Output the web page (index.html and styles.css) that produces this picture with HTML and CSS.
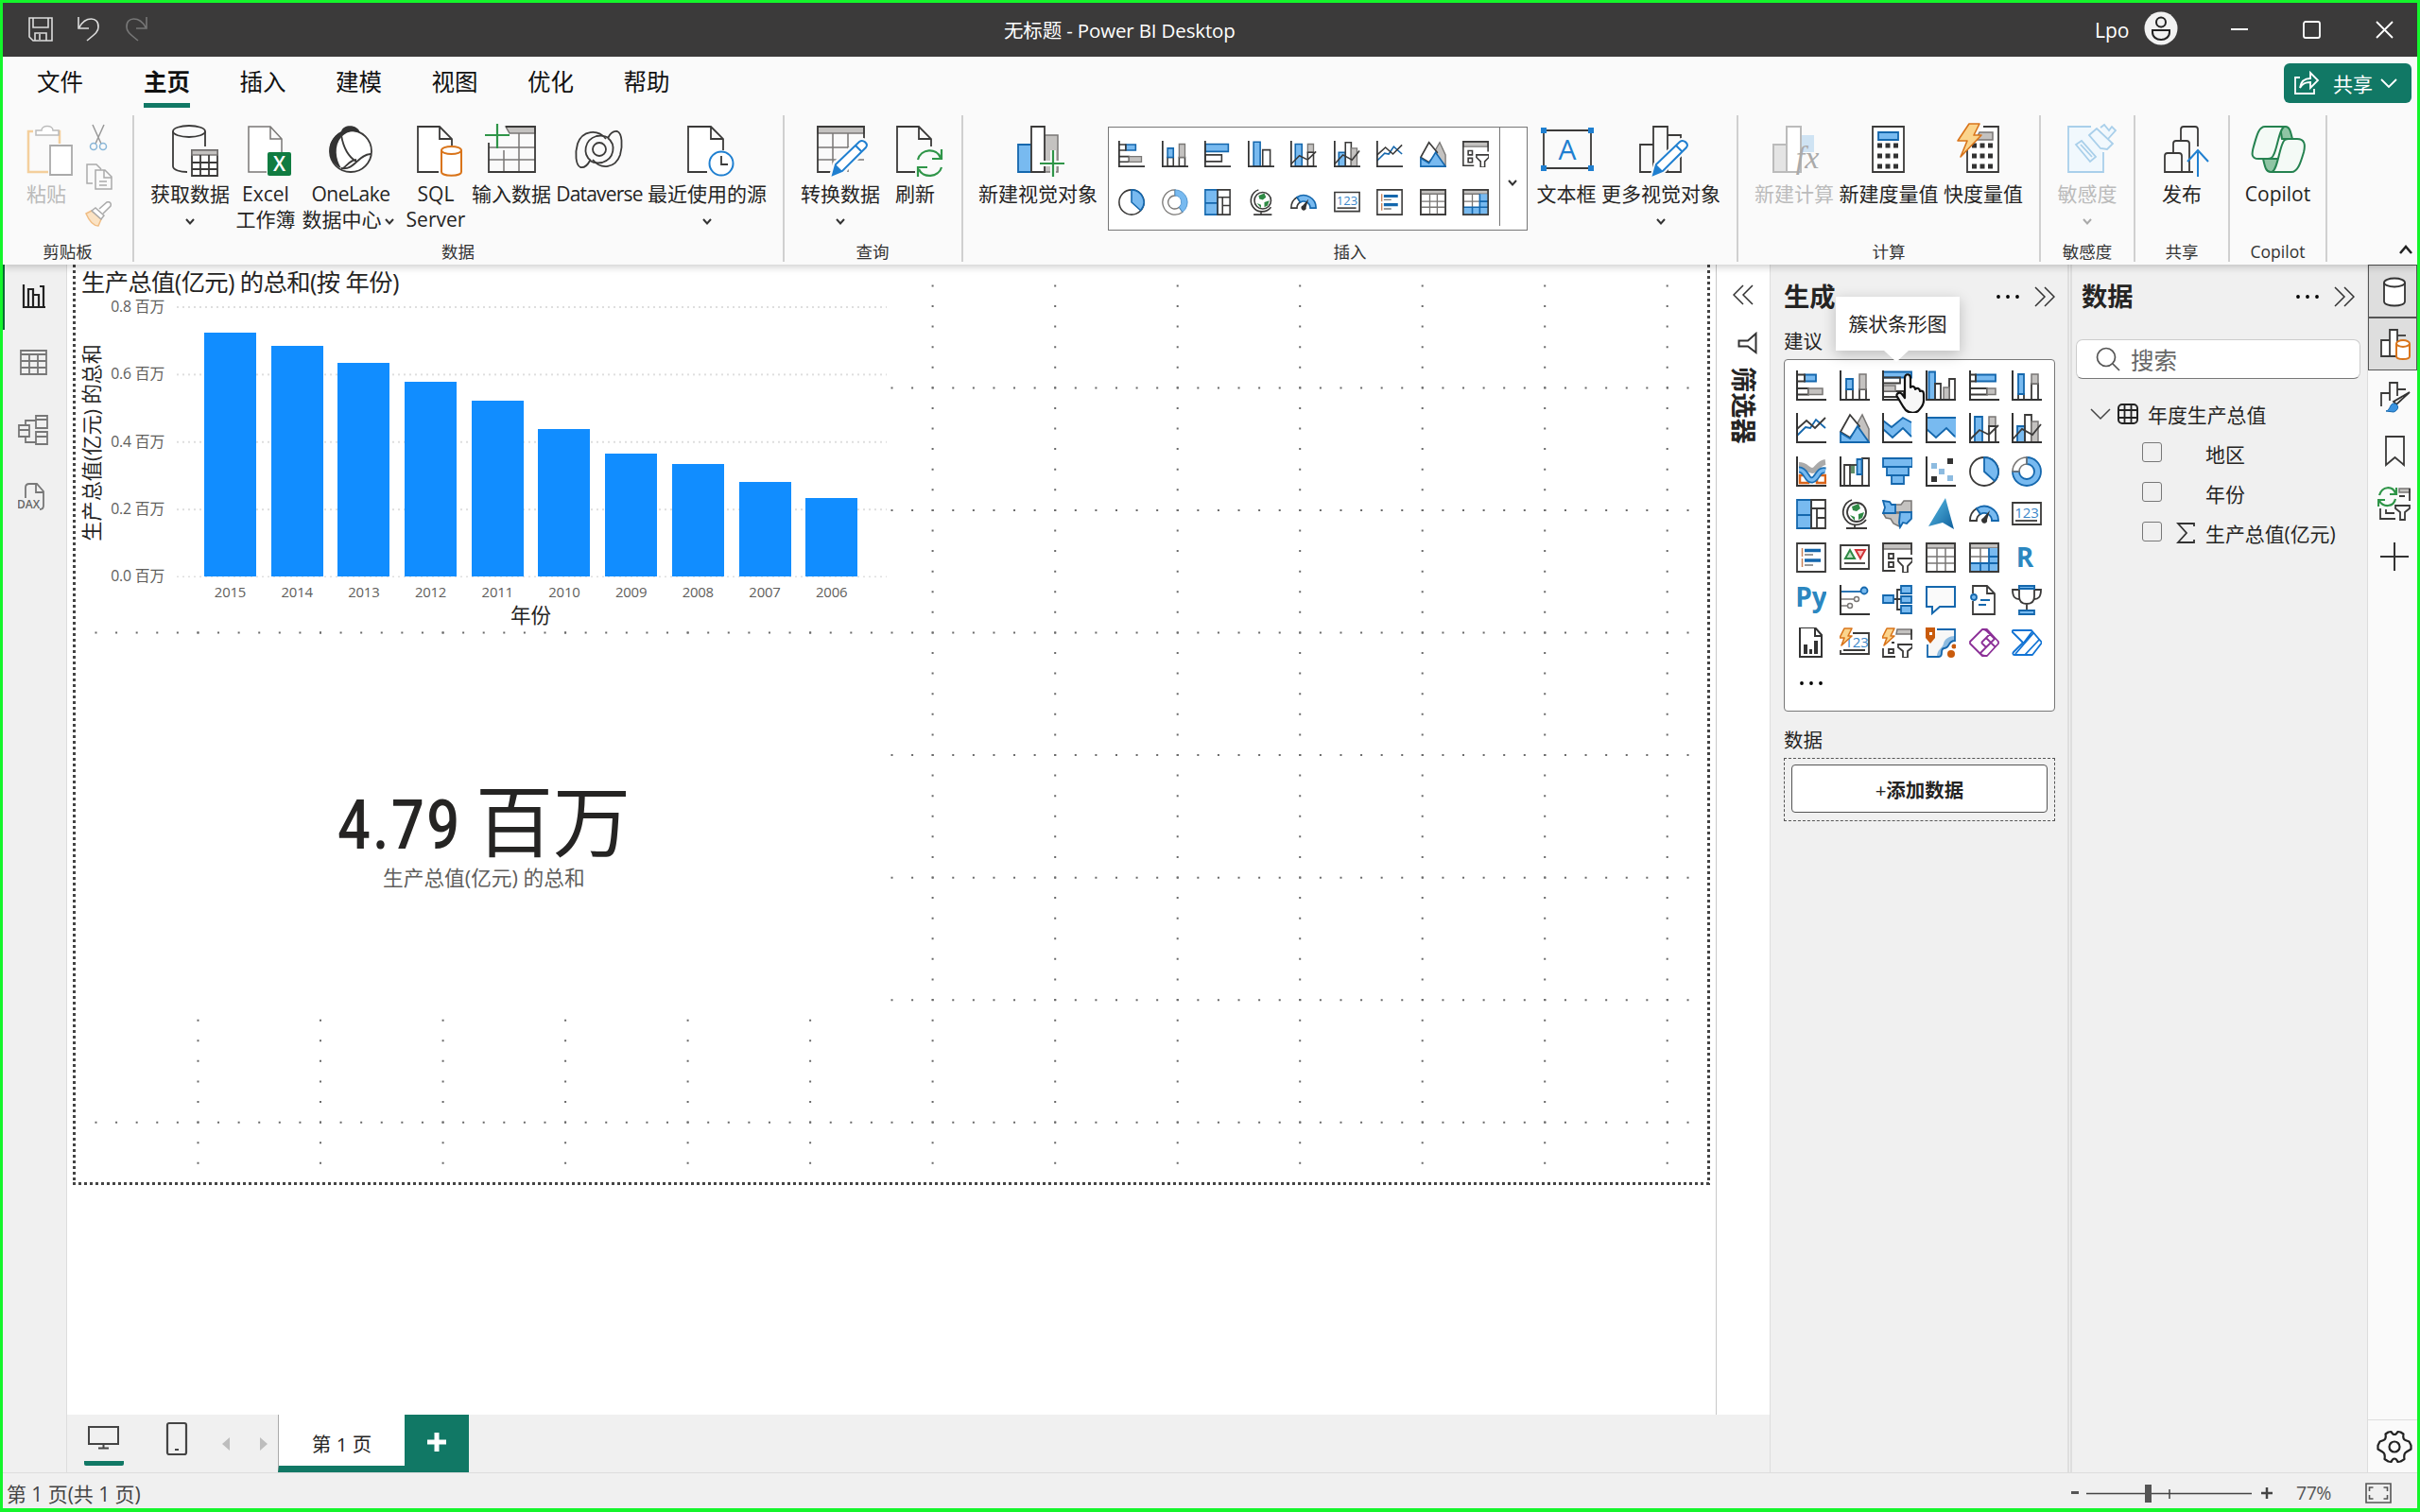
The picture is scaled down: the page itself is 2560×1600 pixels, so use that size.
FILE: index.html
```html
<!DOCTYPE html>
<html lang="zh-CN">
<head>
<meta charset="utf-8">
<title>无标题 - Power BI Desktop</title>
<link rel="stylesheet" href="styles.css">
</head>
<body>
<svg class="defs" width="0" height="0">
  <symbol id="i-sbar" viewBox="0 0 32 32"><path class="b" d="M9 4.500h12v7H9z"/><path class="k" d="M1 4.500h8v7H1M1 19h12v6.500H1"/><path class="g" d="M13 19h15v6.500H13z"/><path class="k2" d="M1 0v31h31"/></symbol>
  <symbol id="i-scol" viewBox="0 0 32 32"><path class="k" d="M7 20h7v11H7zM21 20h7v11h-7z"/><path class="b" d="M7 9h7v11H7z"/><path class="g" d="M21 4h7v16h-7z"/><path class="k2" d="M1 0v31h31"/></symbol>
  <symbol id="i-cbar" viewBox="0 0 32 32"><path class="b" d="M1 1.500h30v6H1z"/><path class="k" d="M1 7.500h18v6H1zM1 22h22v6H1z"/><path class="g" d="M1 16h13v6H1z"/><path class="k2" d="M1 0v31h31"/></symbol>
  <symbol id="i-cbar2" viewBox="0 0 32 32"><path class="b" d="M1 4h28v9H1z"/><path class="k" d="M1 17h20v8H1z"/><path class="k2" d="M1 0v31h31"/></symbol>
  <symbol id="i-ccol" viewBox="0 0 32 32"><path class="b" d="M3.500 1.500H10V31H3.500z"/><path class="k" d="M10 14h6v17h-6zM25 9h6v22h-6z"/><path class="g" d="M19 18h6v13h-6z"/><path class="k2" d="M1 0v31h31"/></symbol>
  <symbol id="i-ccol2" viewBox="0 0 32 32"><path class="b" d="M7 1.500h8V31H7z"/><path class="k" d="M18 11h9v20h-9z"/><path class="k2" d="M1 0v31h31"/></symbol>
  <symbol id="i-pbar" viewBox="0 0 32 32"><path class="b" d="M7 4.500h21v7H7z"/><path class="k" d="M1 4.500h6v7H1M1 19h18v6.500H1"/><path class="g" d="M19 19h9v6.500h-9z"/><path class="k2" d="M1 0v31h31"/></symbol>
  <symbol id="i-pcol" viewBox="0 0 32 32"><path class="k" d="M7 25h6v6H7zM21 14h7v17h-7z"/><path class="b" d="M7 4h6v21H7z"/><path class="g" d="M21 4h7v10h-7z"/><path class="k2" d="M1 0v31h31"/></symbol>
  <symbol id="i-line" viewBox="0 0 32 32"><path class="bs" d="M1 24l9-9 5 1 6-9 10 9"/><path class="k" d="M1 17L11 8l9 8L31 5"/><path class="k2" d="M1 0v31h31"/></symbol>
  <symbol id="i-area" viewBox="0 0 32 32"><path class="g" d="M16 16L24 2l7 15v13z"/><path class="k w" d="M1 20L11 2l10 12-10 12z"/><path class="b" d="M1 31V21l10 6 8-13 12 17z"/></symbol>
  <symbol id="i-sarea" viewBox="0 0 32 32"><path class="fb" d="M1 8l9 6L22 5l9 5v16L22 16 11 26 1 17z"/><path class="bs" d="M1 8l9 7L22 5l9 5M1 17l10 9 11-10 9 9"/><path class="k2" d="M1 0v31h31"/></symbol>
  <symbol id="i-parea" viewBox="0 0 32 32"><path class="fb" d="M1 5h31v22L22 16 11 26 1 17z"/><path class="bs" d="M1 5h31M1 17l10 9 11-10 9 9"/><path class="k2" d="M1 0v31h31"/></symbol>
  <symbol id="i-combo1" viewBox="0 0 32 32"><path class="b" d="M6 4h8v27H6z"/><path class="g" d="M21 4h7v10h-7z"/><path class="k" d="M21 14h7v17h-7zM1 28l10-10 10 5L31 13"/><path class="k2" d="M1 0v31h31"/></symbol>
  <symbol id="i-combo2" viewBox="0 0 32 32"><path class="b" d="M6 14h8v17H6z"/><path class="k" d="M14 2h7v29h-7z"/><path class="g" d="M21 9h7v22h-7z"/><path class="k" d="M1 28l10-11 11 6 9-11"/><path class="k2" d="M1 0v31h31"/></symbol>
  <symbol id="i-ribbon" viewBox="0 0 32 32"><path class="o" d="M4 20h9v8H4zM22 20h9v8h-9z"/><path d="M3 9c8 0 9 6 14 6s6-8 14-9" fill="none" stroke="#aaa" stroke-width="6"/><path d="M3 14c8 0 8 12 14 11s6-12 14-10" fill="none" stroke="#1a6fb5" stroke-width="7"/><path d="M3 14c8 0 8 12 14 11s6-12 14-10" fill="none" stroke="#78baf0" stroke-width="3.500"/><path class="k2" d="M1 0v31h31"/></symbol>
  <symbol id="i-wfall" viewBox="0 0 32 32"><path class="k" d="M5 9h6v22H5zM24 2h7v29h-7z"/><path d="M12 9h4v9h-4z" fill="#5f8f6a"/><path class="b" d="M18.500 3h5v16h-5z"/><path class="k" d="M11 9h7"/><path class="k2" d="M1 0v31h31"/></symbol>
  <symbol id="i-funnel" viewBox="0 0 32 32"><path class="b" d="M1 2h31v9H1zM5 11h23v9H5zM10 20h13v9H10z"/></symbol>
  <symbol id="i-scatter" viewBox="0 0 32 32"><path d="M6 7h6v6H6zM14 13h6v6h-6zM23 20h6v6h-6z" fill="#8dbbe0"/><path d="M23 2h6v6h-6zM6 21h6v6H6z" fill="#333"/><path class="k2" d="M1 0v31h31"/></symbol>
  <symbol id="i-pie" viewBox="0 0 32 32"><circle class="k w" cx="16" cy="16" r="15"/><path class="b" d="M16 1a15 15 0 0 1 11 25L16 16z"/></symbol>
  <symbol id="i-donut" viewBox="0 0 32 32"><path class="b" d="M16 1a15 15 0 1 1-15 15h7a8 8 0 1 0 8-8z"/><path class="gl" d="M1 16A15 15 0 0 1 16 1v7a8 8 0 0 0-8 8z"/></symbol>
  <symbol id="i-donut2" viewBox="0 0 32 32"><path class="gl" d="M16 1a15 15 0 1 0 9 27l-4-6a8 8 0 1 1-5-14z"/><path class="fb" stroke="#4a90cc" d="M16 1a15 15 0 0 1 9 27l-4-6a8 8 0 0 0-5-14z"/></symbol>
  <symbol id="i-tree" viewBox="0 0 32 32"><path class="b" d="M1 1h15v30H1zM1 17h15"/><path class="k" d="M16 1h15v30H16zM16 10h15M22 10v21M22 20h9"/></symbol>
  <symbol id="i-globe" viewBox="0 0 32 32"><circle class="k w" cx="18" cy="14" r="10"/><path d="M13 8l7-3 2 5-4 3-4-1zM20 16l6-2-2 6-4 2zM11 17l5 2v4z" fill="#2f8a45"/><path class="k" d="M13 1A13.500 13.500 0 1 0 28 22M16 27v4M7 31h22"/></symbol>
  <symbol id="i-map" viewBox="0 0 32 32"><path class="g" d="M13 6h7l3-4h8v12H13zM1 15h18l1 9-2 5-6-3-3-5-5-1z"/><path class="b" d="M1 2l7 1 2 3h4v9H1l2-6zM19 14h12v7l-5 5-4-1-3 5-1-5z"/></symbol>
  <symbol id="i-gauge" viewBox="0 0 32 32"><path class="k w" d="M1 23A15 15 0 0 1 8 10l4 6a8 8 0 0 0-4 7z"/><path class="b" d="M8 10a15 15 0 0 1 23 13h-7a8 8 0 0 0-12-7z"/><path d="M22 12l-3 10a3 3 0 1 1-4-2z" fill="#333"/></symbol>
  <symbol id="i-card" viewBox="0 0 32 32"><path class="k w" d="M1 4h30v23H1z"/><path class="k" stroke-width="1.500" d="M4 23h23"/><text x="16" y="19.500" text-anchor="middle" font-size="15" fill="#3a86c8">123</text></symbol>
  <symbol id="i-mrow" viewBox="0 0 32 32"><path class="k w" d="M1 1h30v30H1z"/><path d="M6.500 6v9M6.500 17v9" stroke="#c98258" stroke-width="1.500"/><path d="M9 8.500h17M9 19h17" stroke="#1467ad" stroke-width="3.500"/><path d="M9 13h9M9 24h9" stroke="#777" stroke-width="1.500"/></symbol>
  <symbol id="i-kpi" viewBox="0 0 32 32"><path class="k w" d="M1 3h30v25H1z"/><path d="M6 17l5-9 5 9z" fill="#bfe3c6" stroke="#2f8a45" stroke-width="2"/><path d="M17 8h10l-5 9z" fill="#f7c3c3" stroke="#d13438" stroke-width="2"/><path class="k" stroke-width="1.500" d="M5 22h22"/></symbol>
  <symbol id="i-slicer" viewBox="0 0 32 32"><path class="g" d="M1 1h30v6H1z"/><path class="k" d="M14 30H1V1h30v12M7 12h5v5H7zM7 21h5v5H7zM17 17h15v3l-5 5v7h-5v-7l-5-5z"/></symbol>
  <symbol id="i-table" viewBox="0 0 32 32"><path class="k w" d="M1 1h30v30H1z"/><path class="g" d="M1 1h30v5H1z"/><path class="gl" d="M1 15h30M1 22h30M12 6v25M21 6v25"/><path class="k" d="M1 1h30v30H1z"/></symbol>
  <symbol id="i-matrix" viewBox="0 0 32 32"><path class="k w" d="M1 1h30v30H1z"/><path class="g" d="M1 1h30v5H1z"/><path d="M21 6h10v25H1v-9h20z" fill="#78baf0"/><path class="gl" d="M1 15h20M12 6v16"/><path class="bs" d="M21 6v25M1 22h30M12 22v9M21 15h10"/><path class="k" d="M1 1h30v30H1z"/></symbol>
  <symbol id="i-r" viewBox="0 0 32 32"><text x="14" y="26" text-anchor="middle" font-size="28" font-weight="700" fill="#2b87c0">R</text></symbol>
  <symbol id="i-py" viewBox="0 0 32 32"><text x="16" y="23" text-anchor="middle" font-size="28" font-weight="700" fill="#2b87c0">Py</text></symbol>
  <symbol id="i-infl" viewBox="0 0 32 32"><path class="bs" d="M1 7h21"/><circle class="b" cx="26" cy="6" r="3.500"/><path class="gl" d="M1 15h15M1 22h8"/><circle class="gl w" cx="18" cy="15" r="2.500"/><circle class="gl w" cx="11" cy="22" r="2.500"/><path class="k2" d="M1 0v31h31"/></symbol>
  <symbol id="i-decomp" viewBox="0 0 32 32"><path class="k" d="M12 15h8M20 5h-4v21h4"/><path class="b" d="M1 11h11v8H1zM20 1h11v8H20zM20 12h11v7H20zM20 22h11v8H20z"/></symbol>
  <symbol id="i-chat" viewBox="0 0 32 32"><path d="M1 2h30v21H15l-8 7v-7H1z" fill="#fafafa" stroke="#1467ad" stroke-width="2"/></symbol>
  <symbol id="i-doc" viewBox="0 0 32 32"><path class="k w" d="M4 9V1h15l8 8v22H4V17M19 1v8h8"/><circle class="b" cx="5" cy="13" r="3"/><path class="bs" d="M12 16h10M10 21h8"/></symbol>
  <symbol id="i-cup" viewBox="0 0 32 32"><path class="k w" d="M8 1h16v11c0 6-4 8-8 8s-8-2-8-8zM8 5H1c0 8 3 10 7 10M24 5h7c0 8-3 10-7 10M16 20v7"/><path class="b" d="M8 1h16v3H8zM8 31v-4h16v4z"/></symbol>
  <symbol id="i-report" viewBox="0 0 32 32"><path class="k2 w" d="M4 0h16l7 8v23H4zM20 0v9h7"/><path d="M8 18h4v10H8zM14 23h3v5h-3zM19 14h4v14h-4z" fill="#333"/></symbol>
  <symbol id="i-bcard" viewBox="0 0 32 32"><path class="k" d="M14 6h17v22H1v-4M4 24h23"/><text x="18" y="21" text-anchor="middle" font-size="15" fill="#3a86c8">123</text><path class="bolt" d="M5 1h8l-4 8h4L2 19l3-8H0z"/></symbol>
  <symbol id="i-bslicer" viewBox="0 0 32 32"><path class="g" d="M16 2h15v5H15z"/><path class="k" d="M14 31H1V22M31 2v11M7 23h5v4H7zM10 16h3M17 18h15v3l-5 4v7h-5v-7l-5-4z"/><path class="bolt" d="M5 1h8l-4 8h4L2 19l3-8H0z"/></symbol>
  <symbol id="i-arc" viewBox="0 0 32 32"><path d="M14 2h17v12c-8 0-5 8-11 8s0 9-6 9H2V18" fill="#f7f7f7"/><path d="M31 9v5c-8 0-5 8-11 8s0 9-8 9c0-8 6-9 7-14s6-8 12-8z" fill="#8dbbe0"/><path class="bs" d="M12 2h19v12c-8 0-5 8-11 8s0 9-6 9H2V18"/><path d="M0 0h10v11l-5 6-5-6z" fill="#c95b0c"/><path d="M4 5h3v3H4z" fill="#fff"/><circle cx="27" cy="28" r="4" fill="#c95b0c"/><circle cx="30" cy="20" r="2.500" fill="#c95b0c"/></symbol>
  <symbol id="i-papp" viewBox="0 0 32 32"><path d="M14 2h5l12 13v2L19 30h-5L1 17v-2zM15 2c2 0 3 1 4 2l8 8-9 9-5-5M17 30c-3 0-4-1-5-3l6-6M18 11l10 10M13 16L23 6" fill="none" stroke="#8b2f97" stroke-width="1.800" stroke-linejoin="round"/></symbol>
  <symbol id="i-pauto" viewBox="0 0 32 32"><path d="M2 3h19l11 13-10 13H3c-2 0-2-2-1-3L12 16 1 5c-1-1 0-2 1-2zM4 28L23 6M13 16l9-12M14 29l15-16" fill="none" stroke="#1173d4" stroke-width="1.800" stroke-linejoin="round"/></symbol>
  <symbol id="i-filter" viewBox="0 0 24 24"><path d="M21.500 2v20L13 15.500H3.500v-6H13z" fill="none" stroke="#333" stroke-width="2"/></symbol>
  <symbol id="dn" viewBox="0 0 12 12"><path d="M2 4l4 4.500L10 4" fill="none" stroke="#333" stroke-width="2"/></symbol>
  <symbol id="more" viewBox="0 0 26 8"><circle cx="3" cy="4" r="1.900"/><circle cx="13" cy="4" r="1.900"/><circle cx="23" cy="4" r="1.900"/></symbol>
  <symbol id="dbl" viewBox="0 0 22 22"><path d="M1 1l10 10L1 21M11 1l10 10-10 10" fill="none" stroke="#333" stroke-width="1.500"/></symbol>
</svg>

<header class="titlebar">
  <svg class="quick" width="150" height="57" viewBox="3 3 150 57"><g fill="none" stroke="#ddd" stroke-width="1.600"><path d="M31 19h24v24H35l-4-4zM35 19v10h16V19M37 43v-8h12v8M42 36v6"/><path d="M83 18v12h11M84 29c6-12 21-12 20 0 0 5-5 8-12 14"/></g><path stroke="#777" stroke-width="1.600" fill="none" d="M155 18v12h-11M154 29c-6-12-21-12-20 0 0 5 5 8 12 14"/></svg>
  <span class="apptitle">无标题 - Power BI Desktop</span>
  <div class="account"><span>Lpo</span><svg width="36" height="36" viewBox="0 0 36 36"><circle cx="18" cy="18" r="17.500" fill="#f2f2f2"/><g fill="none" stroke="#222" stroke-width="2"><circle cx="18" cy="11.500" r="5"/><path d="M9 20h18v2c0 5-4 8-9 8s-9-3-9-8z"/></g></svg></div>
  <svg class="winbtns" width="174" height="24" viewBox="0 0 174 24"><g fill="none" stroke="#fff" stroke-width="1.800"><path d="M0 11h18M154 3l17 17M171 3l-17 17"/><rect x="77" y="3" width="17" height="17" rx="2"/></g></svg>
</header>

<nav class="tabs">
  <span>文件</span><span class="on">主页</span><span>插入</span><span>建模</span><span>视图</span><span>优化</span><span>帮助</span>
  <button class="share"><svg width="28" height="28" viewBox="0 0 28 28"><path d="M7 8H2v17h20v-5M7 19c1-7 5-10 11-10V3l8 8-8 8v-6c-5 0-8 1-11 6z" fill="none" stroke="#fff" stroke-width="1.800"/></svg><span>共享</span><svg width="18" height="18" viewBox="0 0 18 18"><path d="M1 5l8 8 8-8" fill="none" stroke="#fff" stroke-width="1.800"/></svg></button>
</nav>

<section class="ribbon">
  <div class="group g-clip">
    <div class="row">
      <div class="cmd dis" style="width:60px"><svg class="ic" viewBox="-40 0 80 56"><path d="M-14 8h-5v43h21M14 21V8H9" fill="none" stroke="#f4cf9c" stroke-width="2.500"/><path d="M-11 12V7h6c0-6 12-6 12 0h6v5z" fill="#fff" stroke="#bbb" stroke-width="1.500"/><path d="M4 23h23v31H4z" fill="#fff" stroke="#aaa" stroke-width="1.800"/></svg><span>粘贴</span></div>
      <div class="minis">
        <svg width="28" height="30" viewBox="0 0 28 30"><g fill="none" stroke="#999" stroke-width="1.500"><path d="M8 1l9 20M20 1l-9 20"/><g stroke="#8ab7d8"><circle cx="9" cy="24" r="3.500"/><circle cx="19" cy="24" r="3.500"/></g></g></svg>
        <svg width="30" height="30" viewBox="0 0 30 30"><path d="M8 22H2V2h10l5 5M11 8h10l7 7v13H11zM20 8v8h8M15 20h8M15 24h8" fill="none" stroke="#aaa" stroke-width="1.500"/></svg>
        <svg width="30" height="28" viewBox="0 0 30 28"><path d="M1 13l6-3 10 9-3 7C8 26 4 20 1 13z" fill="#fbe3c4" stroke="#f0bd85" stroke-width="1.500"/><path d="M7 10l4-3 9 8-3 4zM15 8l8-7c3-1 5 1 4 4l-8 8" fill="#fff" stroke="#aaa" stroke-width="1.500"/></svg>
      </div>
    </div>
    <div class="cap">剪贴板</div>
  </div>

  <div class="group g-data">
    <div class="row">
      <div class="cmd" style="width:88px"><svg class="ic" viewBox="-40 0 80 56"><g class="k"><path d="M-18 8v37c0 4 8 6 15 6M16 8v16"/><ellipse cx="-1" cy="8" rx="17" ry="6"/></g><path class="k w" d="M2 28h27v27H2z"/><path class="g" d="M2 28h27v5H2z"/><path class="k" d="M2 41h27M2 48h27M11 33v22M20 33v22"/></svg><span>获取数据</span><svg class="ch"><use href="#dn"/></svg></div>
      <div class="cmd" style="width:72px"><svg class="ic" viewBox="-40 0 80 56"><path class="gl w" d="M1 51h-19V3H5l12 13v15M5 3v13h12"/><rect x="2" y="30" width="25" height="25" rx="2" fill="#107c41"/><text x="14.500" y="50" text-anchor="middle" font-size="21" font-weight="600" fill="#fff">X</text></svg><span>Excel<br>工作簿</span></div>
      <div class="cmd" style="width:108px"><svg class="ic" viewBox="-40 0 80 56"><circle class="k w" cx="0" cy="29" r="22"/><path d="M-10 8C-8 0 8 0 10 10c-7-4-14-2-20 4-8 9-6 24 0 33-14-6-19-28 0-39z" fill="#333"/><path class="k" d="M-10 47C4 50 8 32 21 32M-10 12C-8 24-4 34 6 40M-8 47c4-3 8-9 14-9"/></svg><span><span class="lat">OneLake</span><br><span class="tight">数据中心<svg class="chi"><use href="#dn"/></svg></span></span></div>
      <div class="cmd" style="width:72px"><svg class="ic" viewBox="-40 0 80 56"><path class="k w" d="M3 51h-22V3H4l13 13v7M4 3v13h13"/><g fill="#fff" stroke="#d9741a" stroke-width="2"><path d="M6 28v23c0 5 21 5 21 0V28"/><ellipse cx="16.500" cy="28" rx="10.500" ry="4"/></g></svg><span>SQL<br>Server</span></div>
      <div class="cmd" style="width:88px"><svg class="ic" viewBox="-40 0 80 56"><path class="g" d="M-6 3h31v7H-2z"/><path class="gl" d="M-24 25h49M-24 38h49M-8 28v23M8 10v41"/><path class="k" d="M-24 20v31h49V3H-6"/><path class="gr" d="M-15 0v26M-28 12H-2"/></svg><span>输入数据</span></div>
      <div class="cmd" style="width:98px"><svg class="ic" viewBox="-40 0 80 56"><g class="k" transform="translate(0 27)"><path d="M7-11C-2-22-18-20-23-6c-3 10-2 23 3 25 5 1 8-3 10-7M-7 11c9 11 24 9 29-5 3-10 2-23-3-25-5-1-8 3-10 7"/><circle r="7"/><path d="M9-12c9 7 7 22-6 26-6 1-10 0-13-2M-9 12C-18 5-16-10-3-14c6-1 10 0 13 2"/></g></svg><span class="lat2">Dataverse</span></div>
      <div class="cmd" style="width:130px"><svg class="ic" viewBox="-40 0 80 56"><path class="k w" d="M0 51h-20V3H4l13 13v12M4 3v13h13"/><circle cx="15" cy="42" r="12.500" fill="#fff" stroke="#1f7fd0" stroke-width="2"/><path class="k" d="M15 34v9h7"/></svg><span>最近使用的源</span><svg class="ch"><use href="#dn"/></svg></div>
    </div>
    <div class="cap">数据</div>
  </div>

  <div class="group g-query">
    <div class="row">
      <div class="cmd" style="width:88px"><svg class="ic" viewBox="-40 0 80 56"><path class="gl" d="M-24 25h49M-24 38h49M-8 10v41M8 10v41"/><path class="g" d="M-24 3h49v7h-49z"/><path class="k" d="M-10 51h-14V3h49v14"/><path d="M-8 54l3-11 25-24c4-3 10 2 7 6L2 50z" fill="#fff" stroke="#fafafa" stroke-width="7"/><path class="pen" d="M-8 54l3-11 25-24c4-3 10 2 7 6L2 50zM16 23l7 7"/><path d="M-8 54l3-11 7 7z" fill="#1f7fd0"/></svg><span>转换数据</span><svg class="ch"><use href="#dn"/></svg></div>
      <div class="cmd" style="width:70px"><svg class="ic" viewBox="-40 0 80 56"><path class="k" d="M0 51h-19V3H4l13 13v8M4 3v13h13"/><path class="gr" d="M3 38c3-12 20-13 24-2M28 27v10H18M28 46c-3 11-20 12-24 2M3 56V46h10"/></svg><span>刷新</span></div>
    </div>
    <div class="cap">查询</div>
  </div>

  <div class="group g-insert">
    <div class="row">
      <div class="cmd" style="width:128px"><svg class="ic" viewBox="-40 0 80 56"><path class="b" d="M-21 22h14v29h-14z"/><path class="g" d="M7 12h14v39H7z"/><path class="k w" d="M-7 3H7v48H-7z"/><path d="M16 28v28M2 42h26" stroke="#fafafa" stroke-width="6"/><path class="gr" d="M16 28v28M2 42h26"/></svg><span>新建视觉对象</span></div>
      <div class="gallery">
        <div class="gicons">
          <svg><use href="#i-sbar"/></svg><svg><use href="#i-scol"/></svg><svg><use href="#i-cbar2"/></svg><svg><use href="#i-ccol2"/></svg><svg><use href="#i-combo1"/></svg><svg><use href="#i-combo2"/></svg><svg><use href="#i-line"/></svg><svg><use href="#i-area"/></svg><svg><use href="#i-slicer"/></svg>
          <svg><use href="#i-pie"/></svg><svg><use href="#i-donut2"/></svg><svg><use href="#i-tree"/></svg><svg><use href="#i-globe"/></svg><svg><use href="#i-gauge"/></svg><svg><use href="#i-card"/></svg><svg><use href="#i-mrow"/></svg><svg><use href="#i-table"/></svg><svg><use href="#i-matrix"/></svg>
        </div>
        <div class="gdrop"><svg width="12" height="12"><use href="#dn"/></svg></div>
      </div>
      <div class="cmd" style="width:70px"><svg class="ic" viewBox="-40 0 80 56"><path class="k" d="M-24 7h50v40h-50z"/><path d="M-27 4h6v6h-6zM23 4h6v6h-6zM-27 44h6v6h-6zM23 44h6v6h-6z" fill="#1f7fd0"/><text x="1" y="38" text-anchor="middle" font-size="30" fill="#1f7fd0">A</text></svg><span>文本框</span></div>
      <div class="cmd" style="width:130px"><svg class="ic" viewBox="-40 0 80 56"><path class="k" d="M-22 22h14v29h-14zM-8 3H7v48H-8zM7 12h14v39H7z"/><path d="M-8 54l3-11 25-24c4-3 10 2 7 6L2 50z" fill="#fff" stroke="#fafafa" stroke-width="6"/><path class="pen" d="M-8 54l3-11 25-24c4-3 10 2 7 6L2 50zM16 23l7 7"/><path d="M-8 54l3-11 7 7z" fill="#1f7fd0"/></svg><span>更多视觉对象</span><svg class="ch"><use href="#dn"/></svg></div>
    </div>
    <div class="cap">插入</div>
  </div>

  <div class="group g-calc">
    <div class="row">
      <div class="cmd dis" style="width:96px"><svg class="ic" viewBox="-40 0 80 56"><path d="M-22 22h14v29h-14z" fill="#e4e4e4" stroke="#bbb" stroke-width="2"/><path d="M7 12h14v18H7z" fill="#cfe3f3"/><path d="M-8 3H7v48H-8z" fill="#fff" stroke="#bbb" stroke-width="2"/><text class="fx" x="14" y="47" text-anchor="middle">fx</text></svg><span>新建计算</span></div>
      <div class="cmd" style="width:104px"><svg class="ic" viewBox="-40 0 80 56"><path class="k w" d="M-17 3h33v48h-33z"/><path class="b" d="M-11 9h21v8h-21z"/><path class="keys" d="M-12 23h22M-12 34h22M-12 45h22"/></svg><span>新建度量值</span></div>
      <div class="cmd" style="width:96px"><svg class="ic" viewBox="-40 0 80 56"><path class="k w" d="M-17 28v23h33V3H0"/><path class="g" d="M-4 9h14v8H-8z"/><path class="keys" d="M-12 23h22M-12 34h22M-12 45h22"/><path class="bolt" stroke-width="2" d="M-15 0h11l-6 12h8l-22 23 7-17h-10z"/></svg><span>快度量值</span></div>
    </div>
    <div class="cap">计算</div>
  </div>
  <div class="group g-100">
    <div class="row"><div class="cmd dis" style="width:98px"><svg class="ic" viewBox="-40 0 80 56"><g fill="#f1f8fd" stroke="#a9cfea" stroke-width="1.800"><path d="M17 30v21h-37V3H4"/><path d="M-12 22l6-4 15 17-6 5zM-7 22l12 13M2 12l8-7 17 16-6 6-7-1zM14 4l4-3 5 6 3-4 4 4-8 9"/></g></svg><span>敏感度</span><svg class="ch"><use href="#dn"/></svg></div></div>
    <div class="cap">敏感度</div>
  </div>
  <div class="group g-100">
    <div class="row"><div class="cmd" style="width:98px"><svg class="ic" viewBox="-40 0 80 56"><path class="k" d="M12 51h-30V34q0-3 3-3H-3q3 0 3 3v17M-9 31V21q0-3 3-3H5q3 0 3 3v30M-1 18V6q0-3 3-3h12q3 0 3 3v18"/><path class="arrow" d="M17 56V30M6 40l11-12 11 12"/></svg><span>发布</span></div></div>
    <div class="cap">共享</div>
  </div>
  <div class="group g-103">
    <div class="row"><div class="cmd" style="width:101px"><svg class="ic" viewBox="-40 0 80 56"><g fill="#f4faf6" stroke="#258250" stroke-width="2" stroke-linejoin="round"><path fill="#8fc5a4" d="M2 3h6c4 0 5 5 7 13H4zM-16 37c2 9 3 14 8 14h8l2-14z"/><path d="M-14 3H7C1 4-1 27-5 33c-1 3-3 4-6 4h-10c-8 0-7-6-5-13 3-10 5-21 12-21z"/><path d="M14 51H-7C-1 50 1 27 5 20c1-3 3-4 6-4h9c8 0 9 6 7 14-3 10-6 21-13 21z"/></g></svg><span>Copilot</span></div></div>
    <div class="cap">Copilot</div>
  </div>
  <svg class="collapse" width="18" height="12" viewBox="0 0 18 12"><path d="M3 10l6-7 6 7" fill="none" stroke="#222" stroke-width="2.500"/></svg>
</section>

<main class="work">
  <aside class="views">
    <svg width="32" height="32" viewBox="0 0 32 32"><path d="M5 3v24h23M10 8v19h5V8zM16 14h5v13M22 5h4v22" fill="none" stroke="#222" stroke-width="2.200"/></svg>
    <svg width="32" height="32" viewBox="0 0 32 32"><path d="M2 3h27v25H2zM2 7h27M2 14h27M2 21h27M11 7v21M20 7v21" fill="none" stroke="#777" stroke-width="1.800"/></svg>
    <svg width="34" height="34" viewBox="0 0 34 34"><path d="M1 12h11v12H1zM1 17h11M19 2h12v13H19zM19 6h12M19 19h12v13H19zM19 24h12M8 12V7h11M8 24v6h11" fill="none" stroke="#777" stroke-width="1.800"/></svg>
    <svg width="34" height="34" viewBox="0 0 34 34"><path d="M8 18V7c0-3 2-4 4-4h8l7 8v15c0 3-2 4-4 4M19 3v9h8" fill="none" stroke="#777" stroke-width="1.800"/><text x="11" y="29" text-anchor="middle" font-size="12" font-weight="600" fill="#666">DAX</text></svg>
  </aside>

  <div class="center">
    <div class="surface">
      <div class="page">
        <svg class="grid" width="1731" height="974" viewBox="0 0 1731 974">
          <path d="M131.500 20.400V953M261 20.400V953M390.600 20.400V953M520.100 20.400V953M649.600 20.400V953M779.100 20.400V953M908.600 20.400V953M1038.200 20.400V953M1167.700 20.400V953M1297.200 20.400V953M1426.700 20.400V953M1556.200 20.400V953M1685.700 20.400V953"/>
          <path d="M22.500 129.400H1709M22.500 259H1709M22.500 388.500H1709M22.500 518H1709M22.500 647.700H1709M22.500 777.300H1709M22.500 906.800H1709"/>
        </svg>
        <section class="chart">
          <h2>生产总值(亿元) 的总和(按 年份)</h2>
          <div class="plotrow">
            <div class="ytitle"><span>生产总值(亿元) 的总和</span></div>
            <div class="yaxis"><span>0.8 百万</span><span>0.6 百万</span><span>0.4 百万</span><span>0.2 百万</span><span>0.0 百万</span></div>
            <div class="plot">
              <i class="bar" style="height:258px"></i><i class="bar" style="height:244px"></i><i class="bar" style="height:226px"></i><i class="bar" style="height:206px"></i><i class="bar" style="height:186px"></i><i class="bar" style="height:156px"></i><i class="bar" style="height:130px"></i><i class="bar" style="height:119px"></i><i class="bar" style="height:100px"></i><i class="bar" style="height:83px"></i>
            </div>
          </div>
          <div class="xaxis"><span>2015</span><span>2014</span><span>2013</span><span>2012</span><span>2011</span><span>2010</span><span>2009</span><span>2008</span><span>2007</span><span>2006</span></div>
          <div class="xtitle">年份</div>
        </section>
        <section class="kpi">
          <div class="big"><span class="num">4.79</span><span class="unit">百万</span></div>
          <div class="kl">生产总值(亿元) 的总和</div>
        </section>
      </div>
    </div>
    <div class="filters">
      <svg class="flip" width="22" height="22"><use href="#dbl"/></svg>
      <svg class="fi" width="24" height="24"><use href="#i-filter"/></svg>
      <span>筛选器</span>
    </div>
    <footer class="pages">
      <div class="device on"><svg width="36" height="28" viewBox="0 0 36 28"><path d="M2 3h31v18H2zM17.500 21v4M12 25.500h11" fill="none" stroke="#444" stroke-width="2"/></svg></div>
      <div class="device"><svg width="24" height="38" viewBox="0 0 24 38"><rect x="2" y="2" width="20" height="33" rx="2" fill="none" stroke="#444" stroke-width="2.200"/><path d="M10 30h4" stroke="#444" stroke-width="2"/></svg></div>
      <svg class="arrows" width="48" height="14" viewBox="0 0 48 14"><path d="M8 0v14L0 7zM40 0v14l8-7z" fill="#bdbdbd"/></svg>
      <div class="ptab">第 1 页</div>
      <div class="padd"><svg width="20" height="20" viewBox="0 0 20 20"><path d="M10 0v20M0 10h20" stroke="#fff" stroke-width="5"/></svg></div>
    </footer>
  </div>

  <aside class="pane build">
    <div class="head"><h3>生成</h3><svg width="26" height="8"><use href="#more"/></svg><svg width="22" height="22"><use href="#dbl"/></svg></div>
    <div class="sub">建议</div>
    <div class="vizbox">
      <svg><use href="#i-sbar"/></svg><svg><use href="#i-scol"/></svg><svg><use href="#i-cbar"/></svg><svg><use href="#i-ccol"/></svg><svg><use href="#i-pbar"/></svg><svg><use href="#i-pcol"/></svg>
      <svg><use href="#i-line"/></svg><svg><use href="#i-area"/></svg><svg><use href="#i-sarea"/></svg><svg><use href="#i-parea"/></svg><svg><use href="#i-combo1"/></svg><svg><use href="#i-combo2"/></svg>
      <svg><use href="#i-ribbon"/></svg><svg><use href="#i-wfall"/></svg><svg><use href="#i-funnel"/></svg><svg><use href="#i-scatter"/></svg><svg><use href="#i-pie"/></svg><svg><use href="#i-donut"/></svg>
      <svg><use href="#i-tree"/></svg><svg><use href="#i-globe"/></svg><svg><use href="#i-map"/></svg><svg viewBox="0 0 32 32"><defs><linearGradient id="nav" x1="0" y1="0" x2="1" y2="1"><stop offset="0" stop-color="#5cc0e8"/><stop offset="1" stop-color="#0f5f9c"/></linearGradient></defs><path d="M21-1l9 33-12-7-15 4z" fill="url(#nav)"/></svg><svg><use href="#i-gauge"/></svg><svg><use href="#i-card"/></svg>
      <svg><use href="#i-mrow"/></svg><svg><use href="#i-kpi"/></svg><svg><use href="#i-slicer"/></svg><svg><use href="#i-table"/></svg><svg><use href="#i-matrix"/></svg><svg><use href="#i-r"/></svg>
      <svg><use href="#i-py"/></svg><svg><use href="#i-infl"/></svg><svg><use href="#i-decomp"/></svg><svg><use href="#i-chat"/></svg><svg><use href="#i-doc"/></svg><svg><use href="#i-cup"/></svg>
      <svg><use href="#i-report"/></svg><svg><use href="#i-bcard"/></svg><svg><use href="#i-bslicer"/></svg><svg><use href="#i-arc"/></svg><svg><use href="#i-papp"/></svg><svg><use href="#i-pauto"/></svg>
      <svg class="dots"><use href="#more"/></svg>
    </div>
    <div class="sub sub2">数据</div>
    <div class="well"><button><b class="plus">+</b>添加数据</button></div>
    <div class="tip">簇状条形图</div>
    <svg class="hand" width="32" height="42" viewBox="0 0 32 42"><path d="M11 39C6 33 5 29 2 25c-2-3 2-6 5-3l3 4V5c0-5 6-5 6 0v10c2-2 5-1 5 2 2-2 5-1 5 2 2-1 4 0 4 3v7c0 4-3 8-6 11-4 3-9 2-13-1z" fill="#f7f7f7" stroke="#111" stroke-width="2.200" stroke-linejoin="round"/></svg>
  </aside>

  <aside class="pane data">
    <div class="head"><h3>数据</h3><svg width="26" height="8"><use href="#more"/></svg><svg width="22" height="22"><use href="#dbl"/></svg></div>
    <div class="search"><svg width="26" height="26" viewBox="0 0 26 26"><circle cx="11" cy="11" r="9.500" fill="none" stroke="#555" stroke-width="1.700"/><path d="M18 18l7 7" stroke="#555" stroke-width="1.700"/></svg><span>搜索</span></div>
    <div class="tree">
      <div class="trow root"><svg width="22" height="14" viewBox="0 0 22 14"><path d="M1 2l10 10L21 2" fill="none" stroke="#444" stroke-width="1.500"/></svg><svg width="24" height="24" viewBox="0 0 24 24"><path d="M2 8h20M2 16h20M8.500 2v20M15.500 2v20" stroke="#222" stroke-width="1.800"/><rect x="2" y="2" width="20" height="20" rx="4" fill="none" stroke="#222" stroke-width="2"/></svg><span>年度生产总值</span></div>
      <div class="trow"><i class="cb"></i><em></em><span>地区</span></div>
      <div class="trow"><i class="cb"></i><em></em><span>年份</span></div>
      <div class="trow"><i class="cb"></i><em><svg width="20" height="22" viewBox="0 0 20 22"><path d="M19 4V1H2l9 10L2 21h17v-3" fill="none" stroke="#333" stroke-width="1.800"/></svg></em><span>生产总值(亿元)</span></div>
    </div>
  </aside>

  <aside class="switch">
    <div class="sw on"><svg viewBox="0 0 36 36"><g fill="#fff" stroke="#333" stroke-width="1.800"><path d="M7 8v20c0 6 22 6 22 0V8"/><ellipse cx="18" cy="8" rx="11" ry="4.500"/></g></svg></div>
    <div class="sw on"><svg viewBox="0 0 36 36"><path class="k w" d="M4 13h9v17H4zM13 2h8v28h-8z"/><path class="k" d="M21 8h9"/><g fill="#fff" stroke="#d9741a" stroke-width="2"><path d="M20 17v13c0 4 14 4 14 0V17"/><ellipse cx="27" cy="16.500" rx="7" ry="3.500"/></g></svg></div>
    <div class="sw"><svg viewBox="0 0 36 36"><path class="k" d="M4 27V13h9M13 21V2h8v14M21 9h9"/><path d="M34 12L20 25l-3-3z" fill="#fff" stroke="#333" stroke-width="1.800"/><path d="M9 32c5-1 4-9 9-8s5 7-1 9z" fill="#3a93e0" stroke="#1467ad"/></svg></div>
    <div class="sw"><svg viewBox="0 0 36 36"><path class="k" d="M9 3h19v30l-9.500-8L9 33z"/></svg></div>
    <div class="sw"><svg viewBox="0 0 36 36"><path class="gr" d="M2 9C5-1 16-1 19 7M20 1v7h-7M19 13c-2 9-13 9-17 2M1 21v-7h7"/><path class="g" d="M23 2h11v4H23z"/><path class="k" d="M34 2v13M23 10h6M3 23v11h16M9 24v4h9M19 20h15v3l-5 4v8h-5v-8l-5-4z"/></svg></div>
    <div class="sw"><svg viewBox="0 0 36 36"><path class="k2" d="M18 3v30M3 18h30"/></svg></div>
    <div class="gear"><svg width="38" height="38" viewBox="0 0 38 38"><g fill="none" stroke="#222" stroke-width="2.200" stroke-linejoin="round"><path d="M12.500 3.500 15.500 3Q17 6 19 6T22.500 3L25.500 3.500 28.500 5.500Q27.500 11 30.500 12L34.500 13.500 36.500 17.500V21.500L31.500 24.500Q28.500 26 29.500 32L25.500 34.500 22.500 35Q21 31.500 19 31.500T15.500 35L12.500 34.500 8.500 32Q9.500 26 6.500 24.500L1.500 21.500V17.500L3.500 13.500 7.500 12Q10.500 11 9.500 5.500z"/><circle cx="19" cy="19" r="5.500"/></g></svg></div>
  </aside>
</main>

<footer class="status">
  <span class="pg">第 1 页(共 1 页)</span>
  <div class="zoom">
    <i class="minus"></i>
    <svg width="176" height="22" viewBox="0 0 176 22"><path d="M0 11.500h175M88 7v10" stroke="#444" stroke-width="1.500"/><path d="M62 2h7v19h-7z" fill="#555"/></svg>
    <svg class="zp" width="14" height="14" viewBox="0 0 14 14"><path d="M7 1v12M1 7h12" stroke="#444" stroke-width="2.500"/></svg>
    <span>77%</span>
    <svg class="fit" width="28" height="22" viewBox="0 0 28 22"><path d="M1 1h26v20H1zM4.500 9V5h4M19.500 5h4v4M4.500 13v4h4M23.500 13v4h-4" fill="none" stroke="#555" stroke-width="1.600"/></svg>
  </div>
</footer>
</body>
</html>
```
FILE: styles.css
```css
* { box-sizing: border-box; }
body {
  margin: 0; width: 2560px; height: 1600px; overflow: hidden;
  display: flex; flex-direction: column;
  border: 3px solid #14f52b; border-bottom-width: 4px; background: #f0f0f0; color: #252423;
  font-family: "Open Sans", "Noto Sans CJK SC", sans-serif; font-size: 21px;
}
svg { display: block; flex: none; }
.defs { display: none; }
h2, h3 { margin: 0; font-weight: 400; }
span { white-space: nowrap; }

.k { fill: none; stroke: #3b3a39; stroke-width: 1.8; }
.k2 { fill: none; stroke: #333; stroke-width: 2; }
.w { fill: #fff; }
.b { fill: #78baf0; stroke: #1467ad; stroke-width: 1.8; }
.bs { fill: none; stroke: #1467ad; stroke-width: 1.8; }
.fb { fill: #78baf0; }
.g { fill: #c4c2c0; stroke: #797775; stroke-width: 1.5; }
.gl { fill: none; stroke: #797775; stroke-width: 1.5; }
.gl.w { fill: #fff; }
.gr { fill: none; stroke: #2f9548; stroke-width: 2.2; }
.o { fill: #fff; stroke: #d9641a; stroke-width: 2.5; }
.bolt { fill: #fbd48c; stroke: #d9741a; stroke-width: 1.6; stroke-linejoin: round; }
.pen { fill: #fff; stroke: #1f7fd0; stroke-width: 2; }
.arrow { fill: none; stroke: #1f7fd0; stroke-width: 2; }
.keys { stroke: #333; stroke-width: 5; stroke-dasharray: 5 3.5; }
.fx { font: italic 34px "Liberation Serif", serif; fill: #aaa; }

.titlebar { height: 57px; flex: none; background: #3b3a3a; color: #fff; display: flex; align-items: center; }
.quick { overflow: visible; }
.apptitle { margin-left: 909px; font-size: 20.5px; letter-spacing: -.15px; width: 260px; padding-bottom: 2px; }
.account { margin-left: 894px; display: flex; align-items: center; gap: 18px; height: 57px; padding-bottom: 4px; }
.account span { width: 34px; padding-top: 4px; }
.winbtns { margin-left: 56px; }

.tabs { height: 62px; flex: none; background: #fafafa; display: flex; align-items: flex-start; padding-left: 36px; font-size: 24.5px; }
.tabs span { line-height: 36px; height: 54px; padding-top: 9px; margin-right: 52.5px; color: #111; }
.tabs span:first-child { margin-right: 64px; }
.tabs .on { font-weight: 700; border-bottom: 5px solid #117865; }
.share { margin: 7px 6px 0 auto; width: 135px; height: 42px; border: 0; border-radius: 6px; background: #117865; color: #fff; font: inherit; display: flex; align-items: center; gap: 14px; padding: 0 0 0 10px; font-size: 21px; }
.tabs .share span { all: unset; color: #fff; white-space: nowrap; }
.share svg:last-child { margin-left: -6px; }

.ribbon { height: 158px; flex: none; background: #fafafa; display: flex; position: relative; z-index: 3; box-shadow: 0 2px 8px rgba(0, 0, 0, .22); clip-path: inset(0 0 -14px 0); }
.lat { letter-spacing: -.5px; }
.lat2 { letter-spacing: -.8px; }
.tight { margin-left: -5px; }
.group { display: flex; flex-direction: column; border-right: 2px solid #d0d0d0; height: 155px; }
.g-clip { width: 139px; padding-left: 16px; }
.g-data { width: 688px; padding-left: 15px; }
.g-query { width: 189px; padding-left: 15px; }
.g-insert { width: 820px; padding-left: 15px; }
.g-calc { width: 320px; padding-left: 11px; }
.g-100 { width: 100px; }
.g-103 { width: 103px; }
.row { display: flex; height: 134px; padding-top: 9px; }
.cmd { flex: none; display: flex; flex-direction: column; align-items: center; text-align: center; line-height: 27px; }
.ic { width: 80px; height: 56px; margin-bottom: 5px; overflow: visible; }
.ch { width: 12px; height: 12px; margin-top: 9px; }
.chi { width: 12px; height: 12px; display: inline-block; margin-left: 2px; }
.dis { color: #bbb; }
.dis .ch { opacity: .4; }
.cap { font-size: 17.5px; line-height: 26px; text-align: center; color: #333; margin-left: -16px; height: 24px; }
.g-calc .cap { margin-left: -11px; }
.g-insert .cap { margin-left: -15px; }
.g-100 .cap, .g-103 .cap { margin-left: 0; }
.minis { display: flex; flex-direction: column; gap: 11px; padding: 0 0 0 11px; }
.gallery { width: 444px; height: 110px; margin: 3px 6px 0 10px; border: 1.5px solid #777; background: #fff; display: flex; }
.gicons { display: grid; grid-template-columns: repeat(9, 45.5px); grid-template-rows: 28px 28px; row-gap: 23px; padding: 14px 0 0 10px; width: 413px; flex: none; }
.gicons svg { width: 28px; height: 28px; }
.gdrop { flex: 1; border-left: 1.5px solid #777; margin-bottom: 4px; display: flex; align-items: center; justify-content: center; padding-top: 12px; padding-right: 3px; }
.collapse { margin: 136px 0 0 74px; }

.work { height: 1278px; flex: none; display: flex; }
.views { width: 68px; border-right: 1px solid #ddd; display: flex; flex-direction: column; align-items: center; gap: 38px; padding: 18px 1px 0 0; background: linear-gradient(#0b6a35, #0b6a35) 0 0 / 2px 69px no-repeat; }
.views svg:last-child { margin-top: -1px; }
.center { width: 1801px; display: grid; grid-template-columns: 1744px 57px; grid-template-rows: 1217px 61px; }
.surface { background: #fff; padding-left: 6px; }
.page {
  width: 1732px; height: 974px; position: relative; padding: 1px 0 0 6px;
  background:
    repeating-linear-gradient(180deg, #444 0 3px, transparent 3px 6px) 0 0 / 3px 100% no-repeat,
    repeating-linear-gradient(180deg, #444 0 3px, transparent 3px 6px) 100% 0 / 3px 100% no-repeat,
    repeating-linear-gradient(90deg, #444 0 3px, transparent 3px 6px) 0 100% / 100% 3px no-repeat;
}
.grid { position: absolute; left: 1px; top: 1px; }
.grid path { fill: none; stroke: #6a6a6a; stroke-width: 2; stroke-dasharray: 2 19.59; }
.chart { position: relative; width: 859px; height: 380px; background: #fff; }
.chart h2 { font-size: 25.3px; line-height: 34px; letter-spacing: -.6px; padding-left: 3px; white-space: nowrap; }
.plotrow { display: flex; height: 310px; margin-top: -1px; }
.ytitle { width: 28px; margin-right: 2px; display: flex; align-items: center; justify-content: center; }
.ytitle span { writing-mode: vertical-rl; text-orientation: sideways; transform: rotate(180deg); font-size: 21.2px; line-height: 24px; letter-spacing: 0; margin-top: -2px; }
.yaxis { width: 61px; height: 307px; display: flex; flex-direction: column; justify-content: space-between; align-items: flex-end; font-size: 15.8px; line-height: 22px; color: #605e5c; letter-spacing: -.2px; margin-top: -1px; }
.plot {
  margin: 10px 0 0 13px; width: 751px; height: 287px; padding: 0 0 1px 29px; display: flex; gap: 15.7px; align-items: flex-end;
  background:
    linear-gradient(90deg, transparent 2px, #fff 2px) 0 0 / 6px 100%,
    linear-gradient(180deg, #dedede 1.5px, transparent 1.5px) 0 0 / 100% 71.4px;
}
.bar { width: 55px; flex: none; background: #118dff; }
.xaxis { display: flex; padding-left: 133px; font-size: 14.9px; line-height: 22px; color: #605e5c; margin-top: -9px; letter-spacing: -.2px; }
.xaxis span { width: 55px; margin-right: 15.7px; text-align: center; flex: none; }
.xtitle { font-size: 21.5px; line-height: 28px; padding-left: 457px; }
.kpi { position: relative; width: 859px; height: 390px; margin-top: 20px; background: #fff; display: flex; flex-direction: column; align-items: flex-start; }
.big { display: flex; align-items: center; margin: 135px 0 0 274px; height: 98px; width: 330px; color: #252423; }
.num { font: 500 73px/80px Roboto, sans-serif; width: 148px; letter-spacing: 3px; transform: scaleX(.84); transform-origin: 0 50%; padding-top: 16px; flex: none; }
.unit { font-size: 82px; line-height: 96px; font-family: "Noto Sans CJK SC", sans-serif; margin-left: -2px; }
.kl { font-size: 21.7px; line-height: 28px; color: #605e5c; padding-left: 322px; margin-top: 1px; }

.filters { background: #fff; border-left: 1.5px solid #c8c8c8; display: flex; flex-direction: column; align-items: center; padding-top: 21px; }
.flip { transform: scaleX(-1); }
.fi { margin: 28px 0 0 8px; }
.filters span { writing-mode: vertical-rl; text-orientation: sideways; font-weight: 700; font-size: 27.3px; line-height: 32px; margin-top: 13px; }
.pages { grid-column: 1 / 3; display: flex; align-items: flex-start; }
.device { width: 42px; height: 54px; margin-left: 18px; display: flex; justify-content: center; padding-top: 10px; }
.device + .device { width: 46px; margin-left: 33px; padding-top: 7px; }
.device.on { border-bottom: 5px solid #117865; border-radius: 2px; }
.arrows { margin: 24px 11px 0 25px; }
.ptab { width: 134px; height: 61px; background: #fff; border-left: 1.5px solid #aaa; border-bottom: 7px solid #117865; text-align: center; line-height: 62px; font-size: 20.5px; }
.padd { width: 68px; height: 61px; background: #117865; display: flex; align-items: center; justify-content: center; padding-bottom: 4px; }

.pane { border-left: 1.5px solid #ddd; position: relative; }
.build { width: 315px; padding: 0 13px 0 14px; }
.data { width: 317px; padding: 0 13px 0 6px; border-left: 5px double #dedede; }
.head { display: flex; align-items: center; height: 67px; }
.head h3 { font-weight: 700; font-size: 27.3px; line-height: 36px; flex: 1; }
.head svg:last-child { margin-left: 15px; }
.sub { font-size: 20.5px; line-height: 28px; height: 33px; }
.vizbox { border: 1.5px solid #777; border-radius: 4px; background: #fff; height: 373px; width: 287px; padding: 11px 0 0 12px; display: grid; grid-template-columns: repeat(6, 45.7px); grid-template-rows: repeat(8, 32px); row-gap: 13.4px; }
.vizbox svg { width: 32px; height: 32px; overflow: visible; }
.vizbox .dots { width: 26px; height: 8px; margin: 9px 0 0 3px; }
.sub2 { margin-top: 16px; }
.well { border: 1.5px dashed #555; height: 67px; width: 287px; padding: 6px 7px; }
.well button { width: 100%; height: 51px; border: 1.5px solid #555; border-radius: 4px; background: #fff; font: 700 20.5px "Open Sans", "Noto Sans CJK SC", sans-serif; color: #252423; padding: 0; }
.plus { font-weight: 400; }
.tip { position: absolute; left: 69px; top: 34px; width: 131px; height: 57px; background: #fff; box-shadow: 0 4px 14px rgba(0, 0, 0, .22); text-align: center; line-height: 58px; font-size: 20.8px; z-index: 5; }
.tip::after { content: ""; position: absolute; left: 51px; top: 57px; border: 13px solid transparent; border-top: 12px solid #fff; border-bottom: 0; }
.hand { position: absolute; left: 132px; top: 115px; z-index: 6; }

.search { height: 42px; margin: 12px 0 0 -2px; width: 301px; background: #fff; border: 1.5px solid #ccc; border-bottom-color: #777; border-radius: 7px; display: flex; align-items: center; padding-left: 20px; gap: 11px; font-size: 24.5px; color: #666; }
.data .head { padding-left: 4px; }
.tree { padding: 16px 0 0 13px; }
.trow { display: flex; align-items: center; height: 42px; font-size: 20.9px; padding-left: 55px; }
.trow.root { padding-left: 0; gap: 6px; }
.trow.root span { margin-left: 3px; }
.cb { width: 21px; height: 21px; border: 1.5px solid #777; border-radius: 3px; margin-top: -3px; }
.trow em { width: 46px; padding-left: 15px; }

.switch { width: 53px; background: #fafafa; border-left: 1px solid #ddd; display: flex; flex-direction: column; }
.sw { height: 56px; display: flex; align-items: center; justify-content: center; flex: none; padding: 1px 0 0 4px; }
.sw svg { width: 36px; height: 36px; }
.sw.on { background: #dedede; border: 1px solid #555; }
.gear { margin-top: auto; height: 56px; border-top: 1px solid #ddd; display: flex; align-items: center; justify-content: center; padding-left: 3px; }

.status { flex: 1; border-top: 1.5px solid #ddd; display: flex; align-items: center; padding-left: 4px; }
.pg { padding-top: 6px; color: #444; letter-spacing: -.05px; line-height: 26px; }
.zoom { margin-left: auto; display: flex; align-items: center; font-size: 19.5px; color: #555; padding: 4px 27px 0 0; line-height: 26px; }
.minus { width: 8px; height: 3px; background: #555; margin-right: 8px; }
.zp { margin: 0 24px 0 8px; }
.zoom span { width: 40px; letter-spacing: -.5px; margin-right: 33px; }
```
